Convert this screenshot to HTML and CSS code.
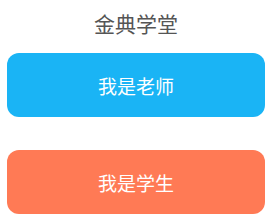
FILE: index.html
```html
<!DOCTYPE html>
<html lang="zh-CN">
<head>
  <meta charset="UTF-8">
  <meta name="viewport" content="width=device-width, initial-scale=1.0">
  <title>金典学堂</title>
  <link rel="stylesheet" href="styles.css">
</head>
<body>
  <h1 class="title">金典学堂</h1>
  <div class="roles">
    <button class="role-btn teacher">我是老师</button>
    <button class="role-btn student">我是学生</button>
  </div>
</body>
</html>
```

FILE: styles.css
```css
body {
  margin: 0;
  padding: 9px 8px 0 7px;
  background: #fff;
  font-family: "Noto Sans CJK SC", "Noto Sans", sans-serif;
}

.title {
  margin: 0;
  height: 28px;
  line-height: 28px;
  font-size: 21px;
  font-weight: normal;
  color: #555;
  text-align: center;
}

.roles {
  display: flex;
  flex-direction: column;
  gap: 33px;
  margin-top: 16px;
}

.role-btn {
  height: 64px;
  border: none;
  border-radius: 12px;
  color: #fff;
  font-family: inherit;
  font-size: 19px;
  cursor: pointer;
}

.teacher {
  background: #1ab4f5;
}

.student {
  background: #ff7a55;
}
```
